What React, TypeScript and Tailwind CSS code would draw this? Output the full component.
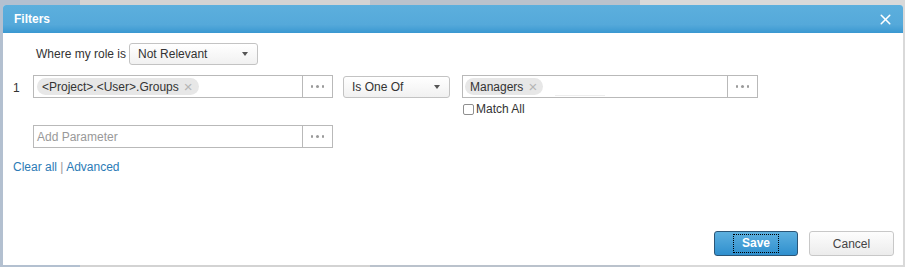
import { X } from 'lucide-react';

function Caret() {
    return <span className="h-0 w-0 border-x-[3.5px] border-t-[4px] border-x-transparent border-t-[#555]" />;
}

function Dots() {
    return (
        <button className="flex w-[30px] items-center justify-center gap-[3px] border border-l-0 border-[#b9b9b9] bg-white">
            <span className="h-[2.5px] w-[2.5px] rounded-full bg-[#9a9a9a]" />
            <span className="h-[2.5px] w-[2.5px] rounded-full bg-[#9a9a9a]" />
            <span className="h-[2.5px] w-[2.5px] rounded-full bg-[#9a9a9a]" />
        </button>
    );
}

function Chip({ label }: { label: string }) {
    return (
        <span className="flex h-[17px] items-center gap-[5px] rounded-full bg-[#e7e7e7] pl-[5px] pr-[6px] text-[12px] text-[#333]">
            {label}
            <span className="text-[15px] leading-none text-[#b5b5b5]">×</span>
        </span>
    );
}

function SelectBox({ label, width }: { label: string; width: string }) {
    return (
        <div
            className={`flex h-[22px] items-center justify-between rounded-[3px] border border-[#c3c3c3] bg-[linear-gradient(#ffffff,#f1f1f1)] pl-[8px] pr-[9px] text-[12px] text-[#333] ${width}`}
        >
            <span>{label}</span>
            <Caret />
        </div>
    );
}

export default function App() {
    return (
        <div
            className="flex h-[267px] w-[905px] flex-col bg-[linear-gradient(to_right,#b3c0d0_0,#b3c0d0_80px,#d3d3d3_80px,#d3d3d3_370px,#bac2cc_370px,#bac2cc_640px,#d9d9d9_640px)] pb-[2px] pl-[3px] pr-[2px] pt-[5px]"
            style={{ fontFamily: '"Liberation Sans", Arial, sans-serif' }}
        >
            <div className="flex flex-1 flex-col overflow-hidden rounded-t-[3px] bg-white">
                {/* header */}
                <div className="flex h-[28px] shrink-0 items-center justify-between bg-[linear-gradient(#5cafdd,#55a9da_70%,#3a98d1)] pl-[11px] pr-[9px]">
                    <span className="text-[12px] font-bold text-white">Filters</span>
                    <X size={17} strokeWidth={2.2} className="text-white" />
                </div>

                {/* body */}
                <div className="flex flex-1 flex-col pl-[10px] pr-[9px] pt-[10px] text-[12px] text-[#333]">
                    <div className="ml-[20px] flex items-center gap-[3px] pl-[3px]">
                        <span>Where my role is</span>
                        <SelectBox label="Not Relevant" width="w-[129px]" />
                    </div>

                    <div className="mt-[10px] flex items-start">
                        <span className="w-[20px] pt-[4px]">1</span>
                        <div className="flex h-[23px]">
                            <div className="flex w-[270px] items-center border border-[#b9b9b9] pl-[3px]">
                                <Chip label="<Project>.<User>.Groups" />
                            </div>
                            <Dots />
                        </div>
                        <div className="ml-[10px] mt-[0.5px]">
                            <SelectBox label="Is One Of" width="w-[107px]" />
                        </div>
                        <div className="ml-[12px] flex flex-col">
                            <div className="flex h-[23px]">
                                <div className="relative flex w-[266px] items-center border border-[#b9b9b9] pl-[2px]">
                                    <Chip label="Managers" />
                                    <span className="absolute left-[92px] top-[19px] h-px w-[50px] bg-[#eeeeee]" />
                                </div>
                                <Dots />
                            </div>
                            <label className="mt-[2px] flex items-center gap-[2px] pl-[1px]">
                                <span className="h-[11px] w-[11px] rounded-[2px] border border-[#8f8f8f] bg-white" />
                                <span>Match All</span>
                            </label>
                        </div>
                    </div>

                    <div className="ml-[20px] mt-[7px] flex h-[23px]">
                        <div className="flex w-[270px] items-center border border-[#b9b9b9] pl-[3px] text-[#999]">
                            Add Parameter
                        </div>
                        <Dots />
                    </div>

                    <div className="mt-[10px] text-[#2b7bb6]">
                        <span>Clear all</span>
                        <span className="text-[#999]"> | </span>
                        <span>Advanced</span>
                    </div>

                    <div className="mt-auto flex justify-end gap-[11px] pb-[9px]">
                        <button className="flex h-[25px] w-[84px] items-center justify-center rounded-[3px] border border-[#2b5677] bg-[linear-gradient(#5db0df,#2f8fce)] text-[12px] font-bold text-white">
                            <span className="border border-dotted border-black px-[8px] leading-[17px]">Save</span>
                        </button>
                        <button className="flex h-[25px] w-[85px] items-center justify-center rounded-[3px] border border-[#c8c8c8] bg-[linear-gradient(#fdfdfd,#ececec)] text-[12px] text-[#444]">
                            Cancel
                        </button>
                    </div>
                </div>
            </div>
        </div>
    );
}
